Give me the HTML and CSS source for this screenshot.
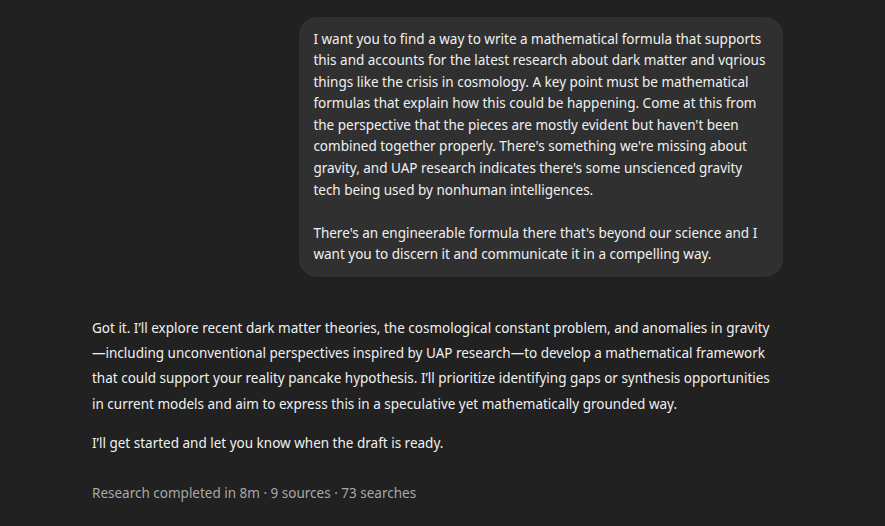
FILE: index.html
```html
<!DOCTYPE html>
<html lang="en">
<head>
<meta charset="utf-8">
<title>Chat</title>
<link rel="stylesheet" href="styles.css">
</head>
<body>
<main class="thread">
  <section class="turn turn-user">
    <div class="bubble">
      <p>I want you to find a way to write a mathematical formula that supports<br>this and accounts for the latest research about dark matter and vqrious<br>things like the crisis in cosmology. A key point must be mathematical<br>formulas that explain how this could be happening. Come at this from<br>the perspective that the pieces are mostly evident but haven't been<br>combined together properly. There's something we're missing about<br>gravity, and UAP research indicates there's some unscienced gravity<br>tech being used by nonhuman intelligences.</p>
      <p class="blank">&nbsp;</p>
      <p>There's an engineerable formula there that's beyond our science and I<br>want you to discern it and communicate it in a compelling way.</p>
    </div>
  </section>
  <section class="turn turn-assistant">
    <p>Got it. I’ll explore recent dark matter theories, the cosmological constant problem, and anomalies in gravity<br>—including unconventional perspectives inspired by UAP research—to develop a mathematical framework<br>that could support your reality pancake hypothesis. I’ll prioritize identifying gaps or synthesis opportunities<br>in current models and aim to express this in a speculative yet mathematically grounded way.</p>
    <p>I’ll get started and let you know when the draft is ready.</p>
    <div class="meta">Research completed in 8m · 9 sources · 73 searches</div>
  </section>
  <div class="composer"></div>
</main>
</body>
</html>
```

FILE: styles.css
```css
* { box-sizing: border-box; }
html, body { margin: 0; padding: 0; }
body {
  background: #212121;
  color: #f0f0f0;
  font-family: "Noto Sans", "Open Sans", sans-serif;
  font-size: 13.5px;
  height: 526px;
  overflow: hidden;
}
p { margin: 0; }
.thread {
  width: 691px;
  height: 526px;
  margin-left: 92px;
  padding-top: 17px;
  display: flex;
  flex-direction: column;
}
.turn-user {
  display: flex;
  justify-content: flex-end;
}
.bubble {
  width: 484px;
  background: #303030;
  border-radius: 18px;
  padding: 11.5px 14.4px 11px 14.4px;
  line-height: 21.6px;
  white-space: nowrap;
}
.turn-assistant {
  margin-top: 39px;
  line-height: 25.2px;
  white-space: nowrap;
}
.turn-assistant p + p { margin-top: 14.4px; }
.meta {
  margin-top: 25px;
  color: #a8a8a8;
  line-height: 25.2px;
}
.composer {
  flex: 1;
  margin-top: 19px;
  margin-left: -12px;
  width: 714px;
  border-radius: 24px 24px 0 0;
  border-top: 1px solid #2e2e2e;
  background: #222222;
}
```
